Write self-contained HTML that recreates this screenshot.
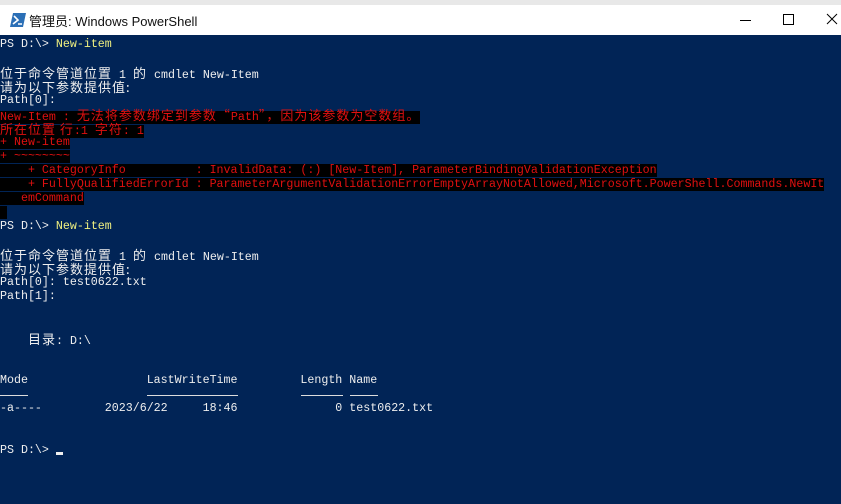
<!DOCTYPE html>
<html><head><meta charset="utf-8"><style>
body{margin:0;width:841px;height:504px;overflow:hidden;background:#012456;position:relative;font-family:"Liberation Mono","Noto Sans CJK SC",monospace}
#top{position:absolute;left:0;top:0;width:841px;height:5px;background:#e8e8e8;border-bottom:1px solid #777}
#tb{position:absolute;left:0;top:5px;width:841px;height:30px;background:#fff;}
#tb .t{position:absolute;left:29px;top:6px;font:13px "Liberation Sans","Noto Sans CJK SC",sans-serif;color:#111}
#con{position:absolute;left:0;top:38px;width:841px}
.l{height:14px;line-height:14px;font-size:11.65px;white-space:pre;color:#eee}
.c{font-family:"Noto Sans CJK SC",sans-serif;font-size:13px;letter-spacing:1px}
.y{color:#f0f080}
.r{color:#e01010;background:#000}
</style></head><body>
<div id="top"></div>
<div id="tb">
<svg style="position:absolute;left:10px;top:8px" width="16" height="14" viewBox="0 0 16 14"><path d="M3 0H16L13 14H0Z" fill="#2b6fb6"/><path d="M4 3L8 7L3 11" stroke="#fff" stroke-width="1.6" fill="none"/><path d="M8 11H12" stroke="#fff" stroke-width="1.5"/></svg>
<span class="t">管理员: Windows PowerShell</span>
<div style="position:absolute;left:740px;top:15px;width:11px;height:1px;background:#000"></div>
<div style="position:absolute;left:783px;top:9px;width:9px;height:9px;border:1px solid #000"></div>
<svg style="position:absolute;left:826px;top:8px" width="12" height="12"><path d="M1 1L11 11M11 1L1 11" stroke="#000" stroke-width="1"/></svg>
</div>
<div id="con">
<div class="l">PS D:\&gt; <span class="y">New-item</span></div>
<div class="l"> </div>
<div class="l"><span class="c">位于命令管道位置</span> 1 <span class="c">的</span> cmdlet New-Item</div>
<div class="l"><span class="c">请为以下参数提供值:</span></div>
<div class="l">Path[0]:</div>
<div class="l"><span class="r">New-Item : <span class="c">无法将参数绑定到参数“</span>Path<span class="c">”，因为该参数为空数组。</span></span></div>
<div class="l"><span class="r"><span class="c">所在位置 行</span>:1 <span class="c">字符</span>: 1</span></div>
<div class="l"><span class="r">+ New-item</span></div>
<div class="l"><span class="r">+ ~~~~~~~~</span></div>
<div class="l"><span class="r">    + CategoryInfo          : InvalidData: (:) [New-Item], ParameterBindingValidationException</span></div>
<div class="l"><span class="r">    + FullyQualifiedErrorId : ParameterArgumentValidationErrorEmptyArrayNotAllowed,Microsoft.PowerShell.Commands.NewIt</span></div>
<div class="l"><span class="r">   emCommand</span></div>
<div class="l"><span class="r"> </span></div>
<div class="l">PS D:\&gt; <span class="y">New-item</span></div>
<div class="l"> </div>
<div class="l"><span class="c">位于命令管道位置</span> 1 <span class="c">的</span> cmdlet New-Item</div>
<div class="l"><span class="c">请为以下参数提供值:</span></div>
<div class="l">Path[0]: test0622.txt</div>
<div class="l">Path[1]:</div>
<div class="l"> </div>
<div class="l"> </div>
<div class="l">    <span class="c">目录</span>: D:\</div>
<div class="l"> </div>
<div class="l"> </div>
<div class="l">Mode                 LastWriteTime         Length Name</div>
<div class="l" style="position:relative"><span style="position:absolute;left:0;top:7px;width:28px;height:1px;background:#ddd"></span><span style="position:absolute;left:147px;top:7px;width:91px;height:1px;background:#ddd"></span><span style="position:absolute;left:301px;top:7px;width:42px;height:1px;background:#ddd"></span><span style="position:absolute;left:350px;top:7px;width:28px;height:1px;background:#ddd"></span></div>
<div class="l">-a----         2023/6/22     18:46              0 test0622.txt</div>
<div class="l"> </div>
<div class="l"> </div>
<div class="l">PS D:\&gt; <span style="display:inline-block;width:7px;height:3px;background:#eee;vertical-align:-2px"></span></div>
</div>
</body></html>
